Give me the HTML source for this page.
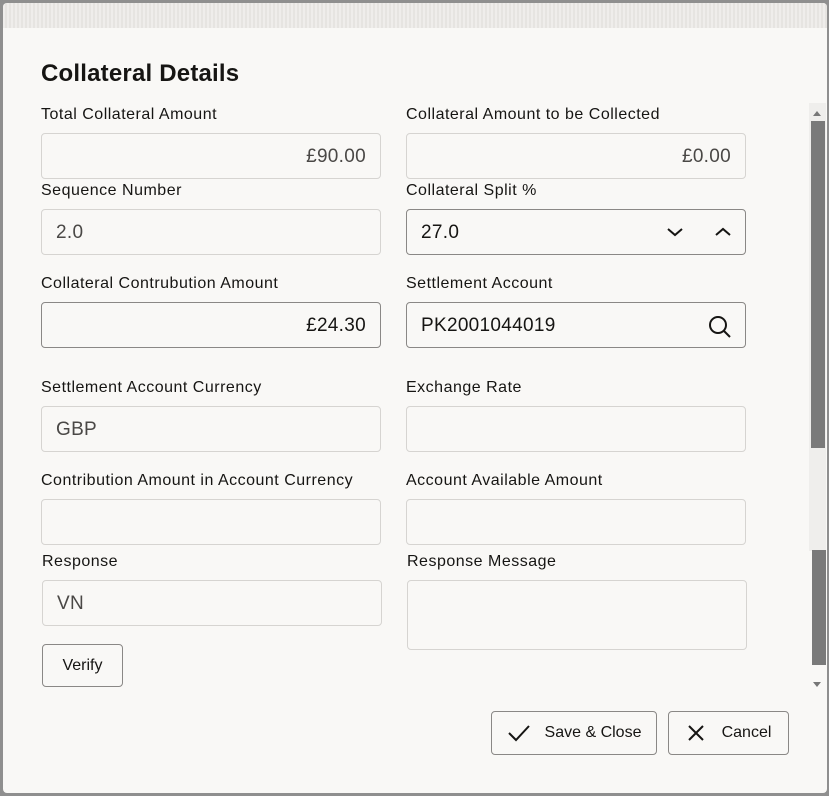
<!DOCTYPE html>
<html><head><meta charset="utf-8"><style>
*{box-sizing:border-box;margin:0;padding:0}
body{width:829px;height:796px;background:#8f8f8f;position:relative;overflow:hidden;font-family:"Liberation Sans","DejaVu Sans",sans-serif;color:#161513}
.dlg{position:absolute;left:3px;top:3px;width:824px;height:790px;background:#f9f8f6;border-radius:4px;overflow:hidden}
.band{position:absolute;left:0;top:0;width:100%;height:25px;background:repeating-linear-gradient(90deg,#efedeb 0 2px,#e6e4e1 2px 4px)}
h1{position:absolute;left:38px;top:57px;font-size:24px;font-weight:bold;letter-spacing:0.2px}
.l{position:absolute;font-size:16px;letter-spacing:0.5px;color:#161513;white-space:nowrap}
.i{position:absolute;width:340px;height:46px;border:1px solid #d6d4d1;border-radius:4px;font-size:19px;letter-spacing:0.3px;color:#4a4846;padding:0 14px;line-height:46px}
.e{border-color:#8a8886;color:#161513}
.r{text-align:right}
.b{position:absolute;border:1px solid #8a8886;border-radius:4px;font-size:16px;color:#161513;display:flex;align-items:center;justify-content:center;background:#f9f8f6}
</style></head><body>
<div class="dlg">
<div class="band"></div>
<h1>Collateral Details</h1>
<div class="l" style="left:38px;top:103px">Total Collateral Amount</div>
<div class="l" style="left:403px;top:103px">Collateral Amount to be Collected</div>
<div class="i r" style="left:38px;top:130px">£90.00</div>
<div class="i r" style="left:403px;top:130px">£0.00</div>
<div class="l" style="left:38px;top:179px">Sequence Number</div>
<div class="l" style="left:403px;top:179px">Collateral Split %</div>
<div class="i" style="left:38px;top:206px">2.0</div>
<div class="i e" style="left:403px;top:206px">27.0
<svg style="position:absolute;left:258px;top:14px" width="20" height="16" viewBox="0 0 20 16"><path d="M3 5l7 6 7-6" fill="none" stroke="#161513" stroke-width="2"/></svg>
<svg style="position:absolute;left:306px;top:14px" width="20" height="16" viewBox="0 0 20 16"><path d="M3 11l7-6 7 6" fill="none" stroke="#161513" stroke-width="2"/></svg></div>
<div class="l" style="left:38px;top:272px">Collateral Contrubution Amount</div>
<div class="l" style="left:403px;top:272px">Settlement Account</div>
<div class="i e r" style="left:38px;top:299px">£24.30</div>
<div class="i e" style="left:403px;top:299px">PK2001044019
<svg style="position:absolute;left:300px;top:11px" width="26" height="26" viewBox="0 0 26 26"><circle cx="11" cy="11" r="8" fill="none" stroke="#161513" stroke-width="2"/><path d="M17 17l6 6" stroke="#161513" stroke-width="2"/></svg></div>
<div class="l" style="left:38px;top:376px">Settlement Account Currency</div>
<div class="l" style="left:403px;top:376px">Exchange Rate</div>
<div class="i" style="left:38px;top:403px">GBP</div>
<div class="i" style="left:403px;top:403px"></div>
<div class="l" style="left:38px;top:469px">Contribution Amount in Account Currency</div>
<div class="l" style="left:403px;top:469px">Account Available Amount</div>
<div class="i" style="left:38px;top:496px"></div>
<div class="i" style="left:403px;top:496px"></div>
<div class="l" style="left:39px;top:550px">Response</div>
<div class="l" style="left:404px;top:550px">Response Message</div>
<div class="i" style="left:39px;top:577px">VN</div>
<div class="i" style="left:404px;top:577px;height:70px"></div>
<div class="b" style="left:39px;top:641px;width:81px;height:43px">Verify</div>
<div class="b" style="left:488px;top:708px;width:166px;height:44px"><svg width="24" height="20" viewBox="0 0 24 20" style="margin-right:14px"><path d="M2 10l7 7L22 3" fill="none" stroke="#161513" stroke-width="2"/></svg>Save &amp; Close</div>
<div class="b" style="left:665px;top:708px;width:121px;height:44px"><svg width="20" height="20" viewBox="0 0 20 20" style="margin-right:16px"><path d="M3 3l14 14M17 3L3 17" stroke="#161513" stroke-width="2"/></svg>Cancel</div>
<div style="position:absolute;left:806px;top:100px;width:17px;height:448px;background:#efeeec"></div>
<div style="position:absolute;left:810px;top:108px;width:0;height:0;border-left:4px solid transparent;border-right:4px solid transparent;border-bottom:5px solid #777"></div>
<div style="position:absolute;left:808px;top:118px;width:14px;height:327px;background:#7a7a7a"></div>
<div style="position:absolute;left:809px;top:547px;width:14px;height:115px;background:#7a7a7a"></div>
<div style="position:absolute;left:810px;top:679px;width:0;height:0;border-left:4px solid transparent;border-right:4px solid transparent;border-top:5px solid #777"></div>
</div>
</body></html>
